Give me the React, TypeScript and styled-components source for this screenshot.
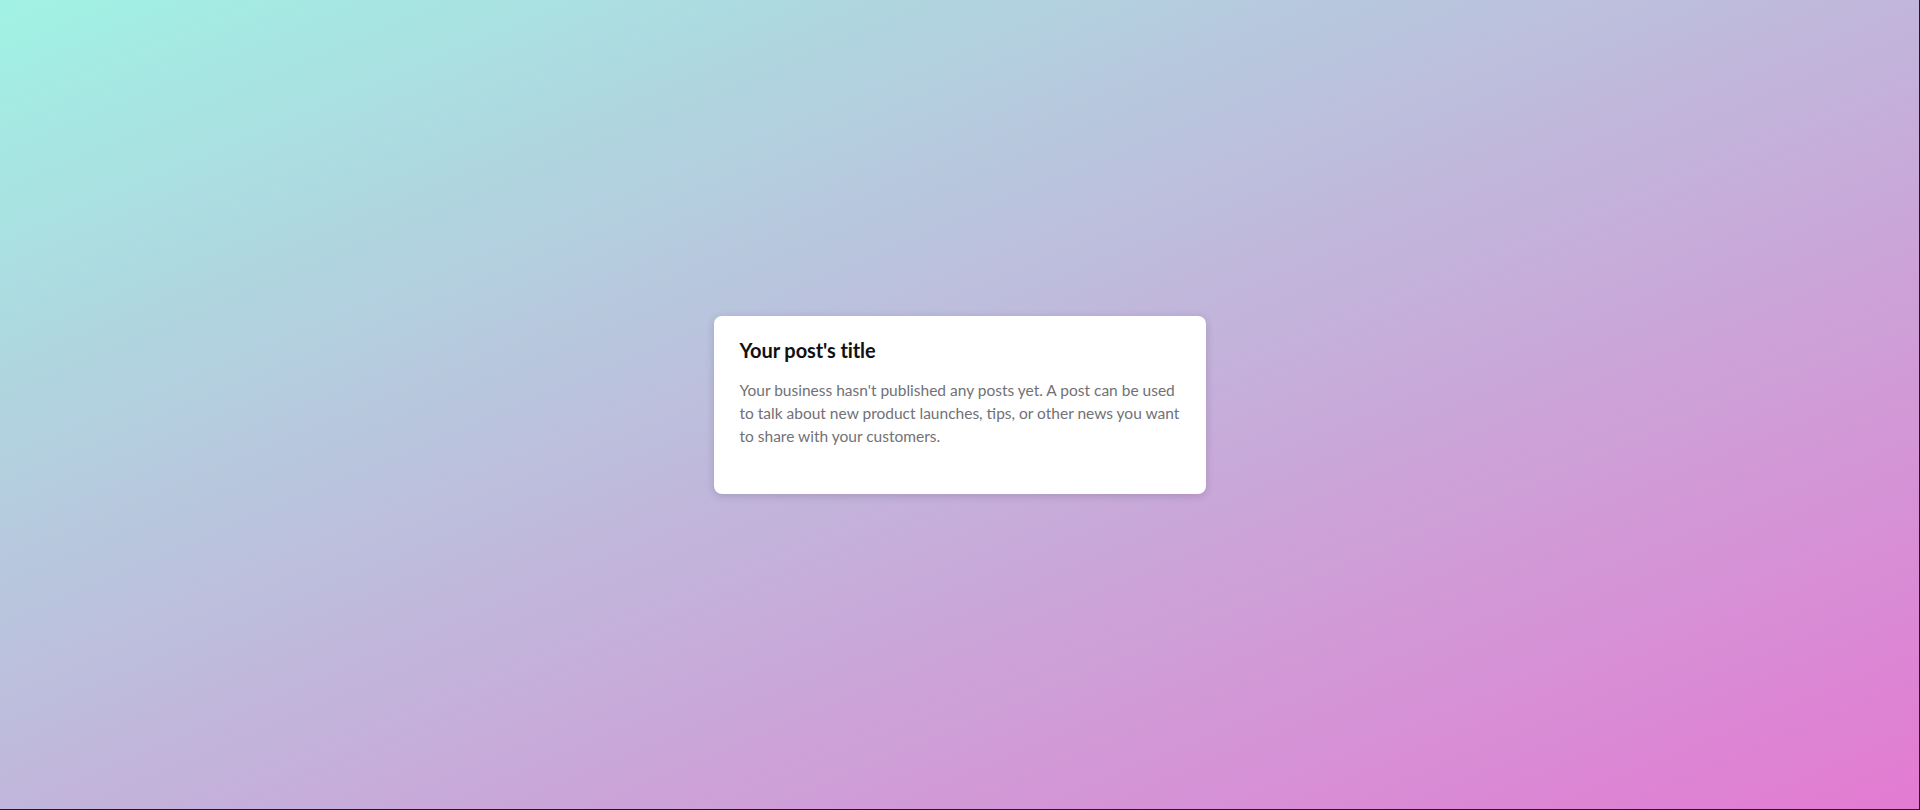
import React from 'react';
import styled, { createGlobalStyle } from 'styled-components';

const GlobalStyle = createGlobalStyle`
  html, body {
    margin: 0;
    padding: 0;
    height: 100%;
  }
  body {
    font-family: 'Lato', 'Open Sans', sans-serif;
  }
`;

const Page = styled.div`
  box-sizing: border-box;
  display: flex;
  align-items: center;
  justify-content: center;
  width: 100vw;
  height: 100vh;
  background: linear-gradient(to bottom right, #a0f2e4 0%, #c1b6db 50%, #e37ad2 100%);
  border-right: 1px solid #1c1c24;
  border-bottom: 1px solid #1c1c24;
`;

const Card = styled.div`
  box-sizing: border-box;
  width: 492px;
  padding: 22px 26px 46px;
  background: #ffffff;
  border-radius: 8px;
  box-shadow: 0 2px 8px rgba(40, 30, 70, 0.18);
`;

const Title = styled.h2`
  margin: 0 0 17px;
  font-size: 20px;
  line-height: 24px;
  font-weight: 700;
  color: #111111;
  letter-spacing: -0.1px;
`;

const Body = styled.p`
  margin: 0;
  font-size: 15.5px;
  line-height: 23px;
  color: #717176;
`;

// -------------------
// Exported Components
// -------------------

export default function App() {
  return (
    <>
      <GlobalStyle />
      <Page>
        <Card>
          <Title>Your post's title</Title>
          <Body>
            Your business hasn't published any posts yet. A post can be used to talk about new product
            launches, tips, or other news you want to share with your customers.
          </Body>
        </Card>
      </Page>
    </>
  );
}
